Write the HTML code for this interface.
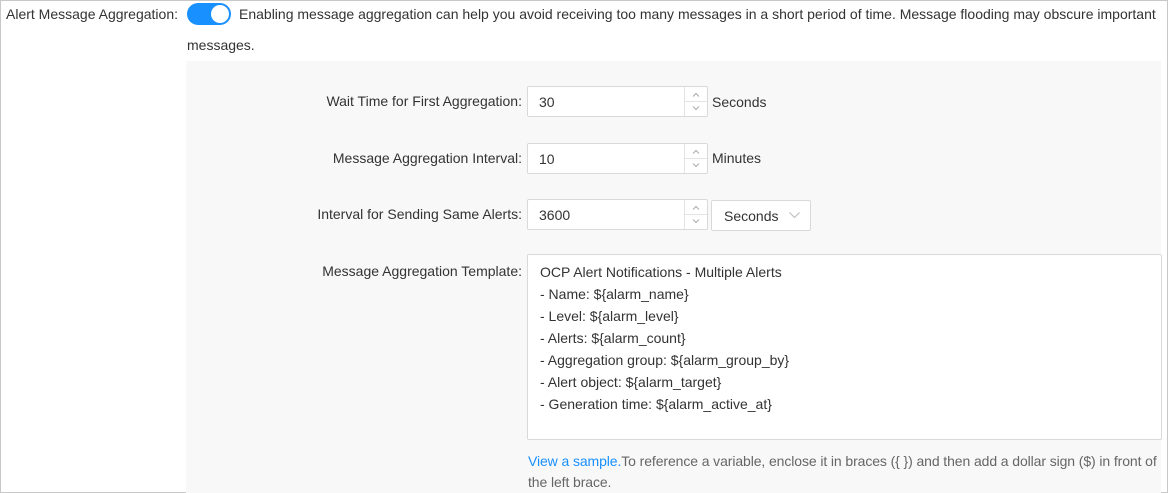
<html><head><style>
body{margin:0;width:1168px;height:493px;overflow:hidden;font-family:"Liberation Sans",sans-serif;font-size:14px;color:#333;background:#fff}
.frame{position:absolute;left:0;top:0;width:1166px;height:491px;border:1px solid #c8c8c8}
.a{position:absolute}
.panel{left:186px;top:61px;width:975px;height:432px;background:#f8f8f8}
.lbl{width:330px;text-align:right;left:192px;white-space:nowrap}
.inp{background:#fff;border:1px solid #d9d9d9;border-radius:2px;height:29px;width:179px;left:527px}
.inp span{position:absolute;left:11px;top:7px}
.arr{position:absolute;right:0;top:0;width:22px;height:29px;border-left:1px solid #e3e3e3}
.arr svg{position:absolute;left:7px}
.arr .d{position:absolute;left:0;top:14px;width:22px;border-top:1px solid #e3e3e3}
</style></head><body>
<div class="frame"></div>
<div class="a" style="left:6px;top:6px;white-space:nowrap">Alert Message Aggregation:</div>
<div class="a" style="left:187px;top:3px;width:44px;height:22px;border-radius:11px;background:#1890ff"><div class="a" style="right:2px;top:2px;width:18px;height:18px;border-radius:50%;background:#fff"></div></div>
<div class="a" style="left:239px;top:6px;white-space:nowrap">Enabling message aggregation can help you avoid receiving too many messages in a short period of time. Message flooding may obscure important</div>
<div class="a" style="left:187px;top:37px">messages.</div>
<div class="a panel"></div>
<div class="a lbl" style="top:93px">Wait Time for First Aggregation:</div>
<div class="a inp" style="top:86px"><span>30</span><div class="arr"><svg width="8" height="5" style="top:5px"><path d="M1 4.5L4 1.5L7 4.5" fill="none" stroke="#aaa"/></svg><div class="d"></div><svg width="8" height="5" style="top:19px"><path d="M1 0.5L4 3.5L7 0.5" fill="none" stroke="#aaa"/></svg></div></div>
<div class="a" style="left:712px;top:94px">Seconds</div>
<div class="a lbl" style="top:150px">Message Aggregation Interval:</div>
<div class="a inp" style="top:143px"><span>10</span><div class="arr"><svg width="8" height="5" style="top:5px"><path d="M1 4.5L4 1.5L7 4.5" fill="none" stroke="#aaa"/></svg><div class="d"></div><svg width="8" height="5" style="top:19px"><path d="M1 0.5L4 3.5L7 0.5" fill="none" stroke="#aaa"/></svg></div></div>
<div class="a" style="left:712px;top:150px">Minutes</div>
<div class="a lbl" style="top:206px">Interval for Sending Same Alerts:</div>
<div class="a inp" style="top:199px"><span>3600</span><div class="arr"><svg width="8" height="5" style="top:5px"><path d="M1 4.5L4 1.5L7 4.5" fill="none" stroke="#aaa"/></svg><div class="d"></div><svg width="8" height="5" style="top:19px"><path d="M1 0.5L4 3.5L7 0.5" fill="none" stroke="#aaa"/></svg></div></div>
<div class="a" style="left:711px;top:200px;width:98px;height:29px;background:#fff;border:1px solid #d9d9d9;border-radius:2px"><span class="a" style="left:12px;top:7px">Seconds</span><svg class="a" style="left:77px;top:11px" width="11" height="7"><path d="M0.5 0.5L5.5 5.5L10.5 0.5" fill="none" stroke="#bbb"/></svg></div>
<div class="a lbl" style="top:263px">Message Aggregation Template:</div>
<div class="a" style="left:527px;top:254px;width:635px;height:186px;background:#fff;border:1px solid #d9d9d9;border-radius:2px;line-height:22px;padding:6px 0 0 12px;box-sizing:border-box">OCP Alert Notifications - Multiple Alerts<br>- Name: ${alarm_name}<br>- Level: ${alarm_level}<br>- Alerts: ${alarm_count}<br>- Aggregation group: ${alarm_group_by}<br>- Alert object: ${alarm_target}<br>- Generation time: ${alarm_active_at}</div>
<div class="a" style="left:528px;top:451px;width:636px;line-height:21px;color:#666;letter-spacing:-0.1px"><span style="color:#1890ff">View a sample.</span>To reference a variable, enclose it in braces ({ }) and then add a dollar sign ($) in front of the left brace.</div>
</body></html>
